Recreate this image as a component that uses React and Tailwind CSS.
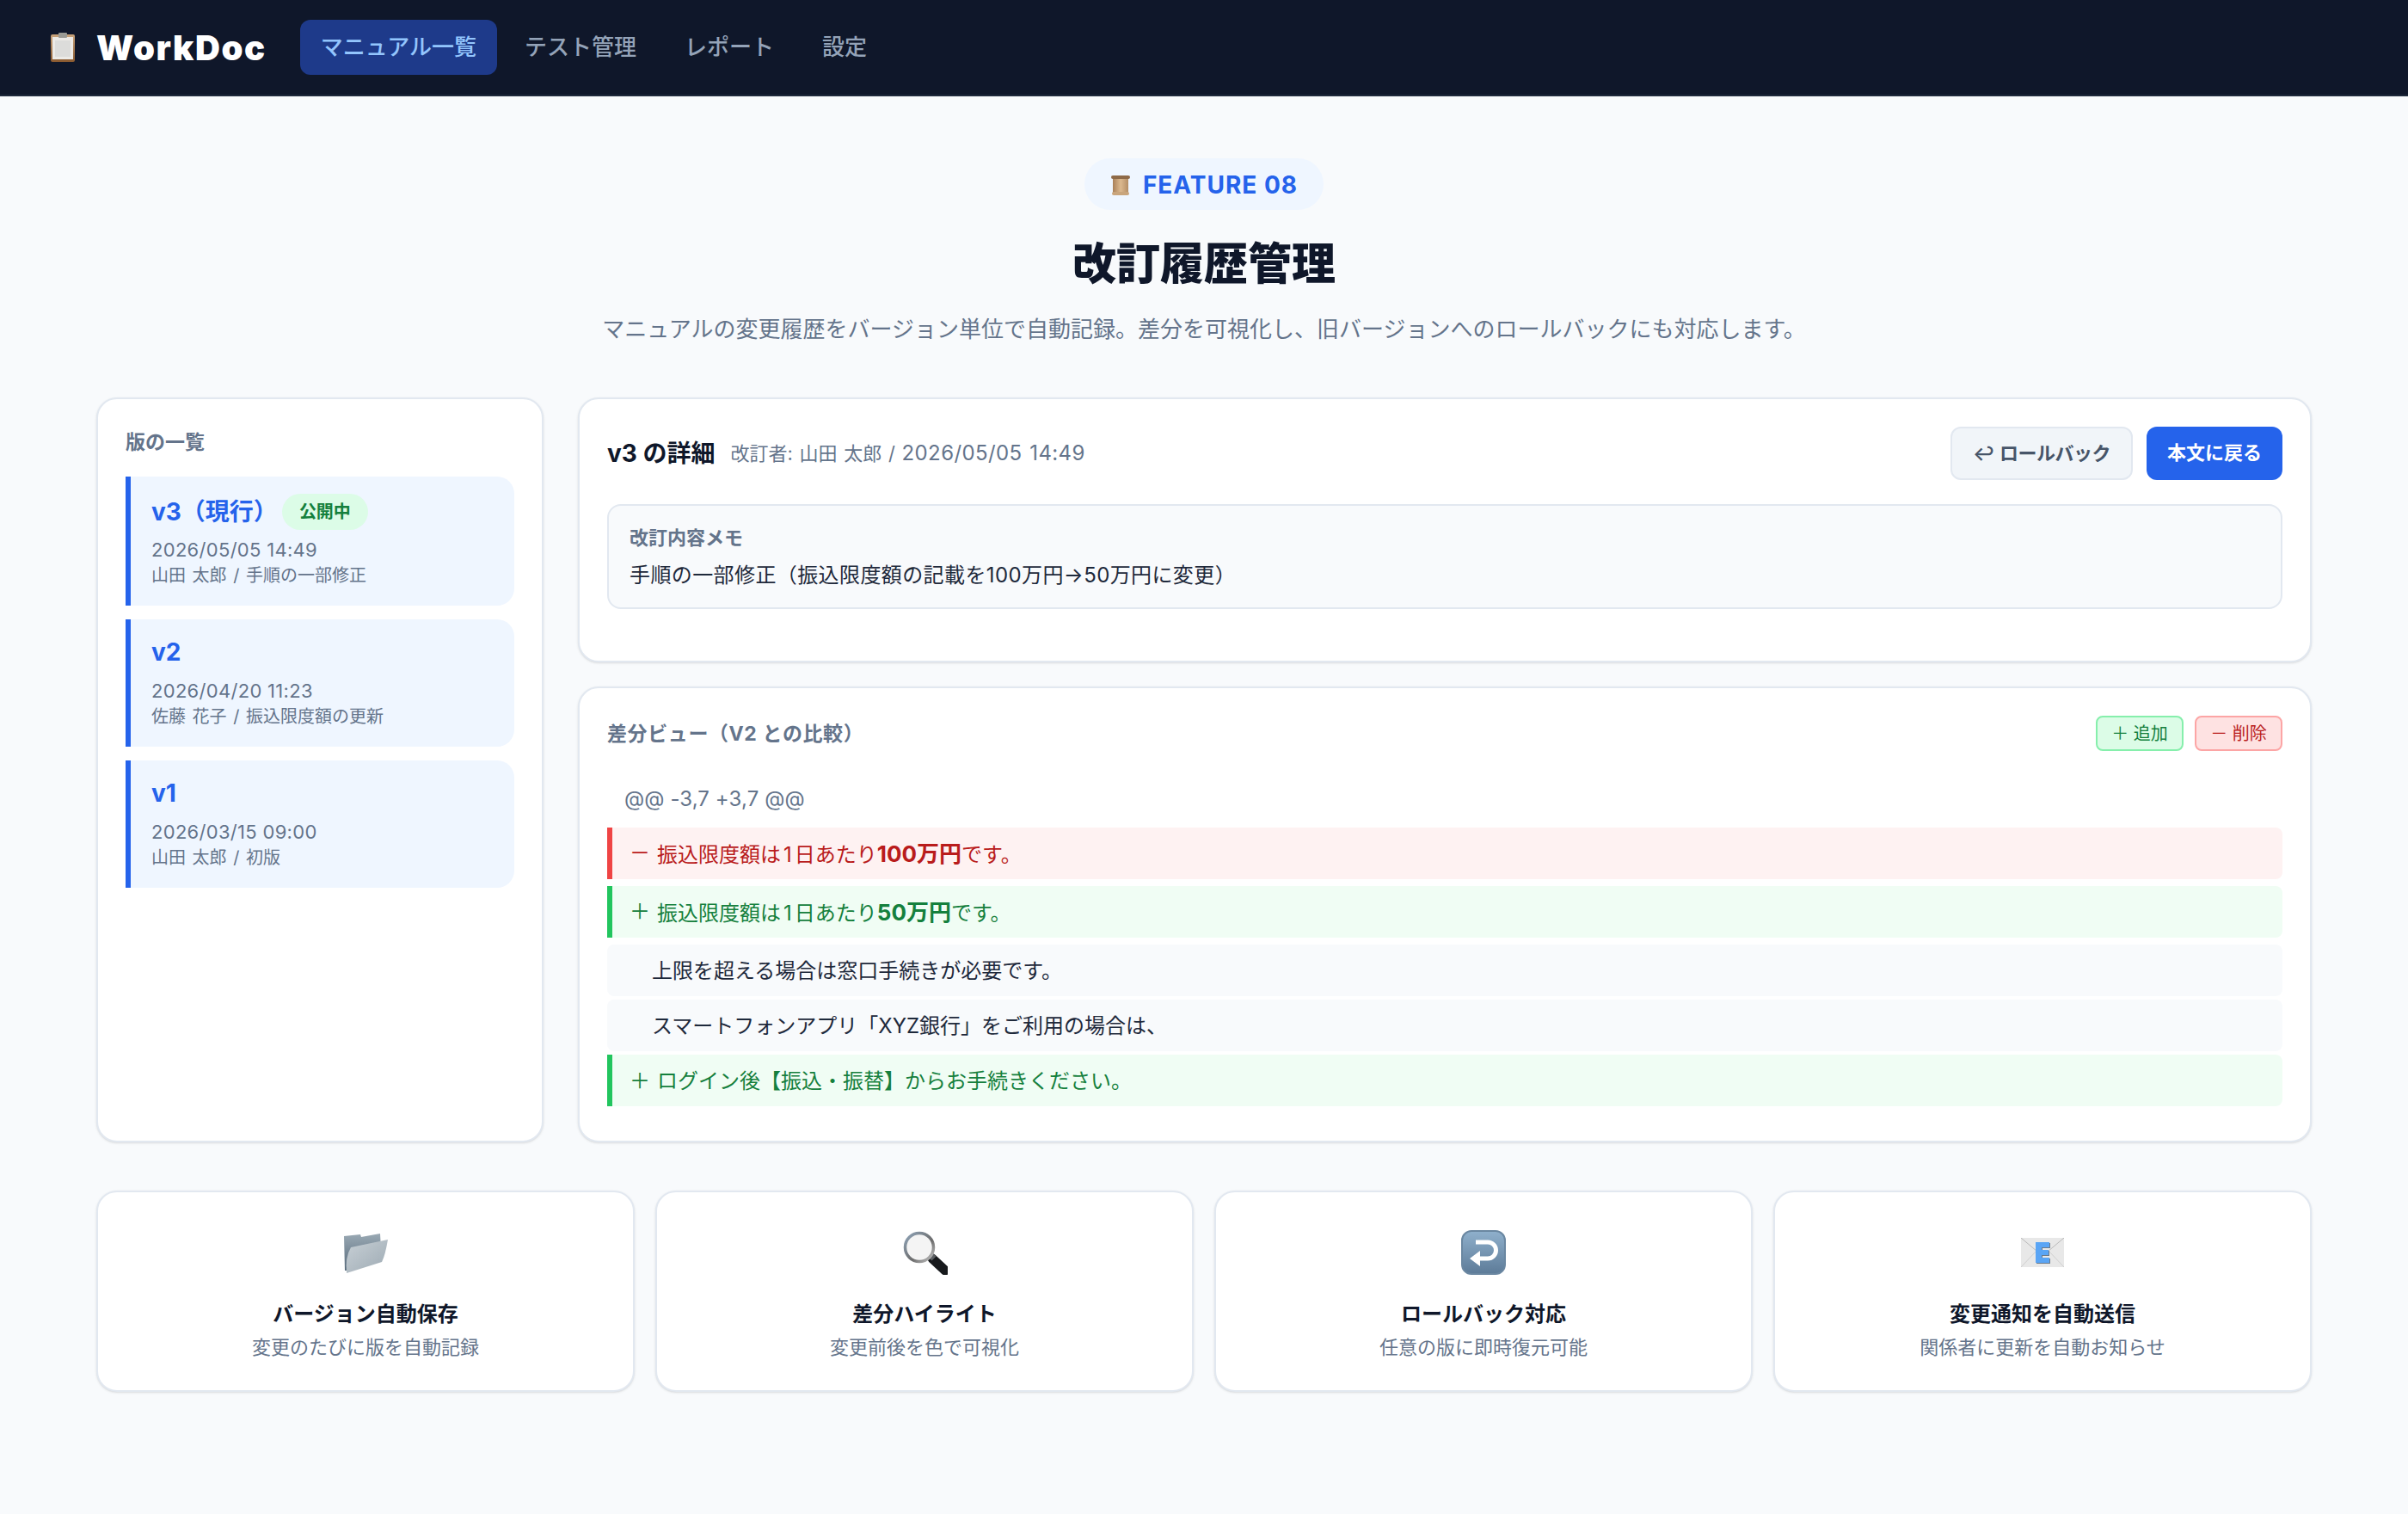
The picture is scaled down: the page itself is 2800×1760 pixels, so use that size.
const versions = [
  { name: "v3（現行）", date: "2026/05/05 14:49", meta: "山田 太郎 / 手順の一部修正", current: true },
  { name: "v2", date: "2026/04/20 11:23", meta: "佐藤 花子 / 振込限度額の更新" },
  { name: "v1", date: "2026/03/15 09:00", meta: "山田 太郎 / 初版" },
];

const navItems = ["テスト管理", "レポート", "設定"];

function ClipboardEmoji() {
  return (
    <svg width="34" height="36" viewBox="0 0 34 36">
      <defs>
        <linearGradient id="board" x1="0" y1="0" x2="0" y2="1">
          <stop offset="0" stopColor="#c9a47c" />
          <stop offset="1" stopColor="#8a5a30" />
        </linearGradient>
      </defs>
      <rect x="3" y="3" width="28" height="32" rx="2" fill="url(#board)" />
      <rect x="5" y="6" width="24" height="26" fill="#eceae6" />
      <rect x="8" y="10" width="18" height="19" fill="#dcdcda" />
      <rect x="12" y="1" width="10" height="6" rx="1" fill="#9a9a94" />
    </svg>
  );
}

function ScrollEmoji() {
  return (
    <svg width="24" height="24" viewBox="0 0 24 24">
      <defs>
        <linearGradient id="parch" x1="0" y1="0" x2="1" y2="0">
          <stop offset="0" stopColor="#a98058" />
          <stop offset="0.5" stopColor="#dcb98f" />
          <stop offset="1" stopColor="#b48e66" />
        </linearGradient>
      </defs>
      <rect x="3" y="3" width="18" height="19" fill="url(#parch)" />
      <rect x="1" y="1" width="22" height="4" rx="2" fill="#8e6a48" />
      <rect x="2" y="20" width="20" height="4" rx="2" fill="#c9a57c" />
    </svg>
  );
}

function FolderEmoji() {
  return (
    <svg width="56" height="52" viewBox="0 0 56 52">
      <defs>
        <linearGradient id="folderBack" x1="0" y1="0" x2="0" y2="1">
          <stop offset="0" stopColor="#9aa9b4" />
          <stop offset="1" stopColor="#56697a" />
        </linearGradient>
        <linearGradient id="folderFront" x1="0" y1="0" x2="1" y2="1">
          <stop offset="0" stopColor="#c8d0d6" />
          <stop offset="1" stopColor="#9daab3" />
        </linearGradient>
      </defs>
      <path d="M3 7 L22 5 L23 8 L45 4 L46 22 L8 47 L4 47 Z" fill="url(#folderBack)" />
      <path d="M11 20 L54 11 Q51 29 47 37 L6 50 Q4 32 11 20 Z" fill="url(#folderFront)" />
    </svg>
  );
}

function MagnifierEmoji() {
  return (
    <svg width="54" height="52" viewBox="0 0 54 52">
      <defs>
        <linearGradient id="lensRing" x1="0" y1="0" x2="1" y2="1">
          <stop offset="0" stopColor="#8fa4b8" />
          <stop offset="0.6" stopColor="#6c6c6c" />
          <stop offset="1" stopColor="#c9c9c9" />
        </linearGradient>
      </defs>
      <path d="M36 33 L51 47" stroke="#17191c" strokeWidth="11" strokeLinecap="round" />
      <path d="M35 30 L38 33" stroke="#5b5f63" strokeWidth="7" />
      <circle cx="21" cy="20" r="16.5" fill="#f4f4f4" stroke="url(#lensRing)" strokeWidth="3.5" />
    </svg>
  );
}

function ReturnEmoji() {
  return (
    <svg width="52" height="52" viewBox="0 0 52 52">
      <defs>
        <linearGradient id="returnBg" x1="0" y1="0" x2="0" y2="1">
          <stop offset="0" stopColor="#8fb0cc" />
          <stop offset="1" stopColor="#5d7b98" />
        </linearGradient>
      </defs>
      <rect x="1" y="1" width="50" height="50" rx="11" fill="url(#returnBg)" stroke="#6a87a1" strokeWidth="2" />
      <path d="M17 14 H31 A9.5 9.5 0 0 1 31 33 H20" fill="none" stroke="#fff" strokeWidth="5" />
      <path d="M22 24 V42 L10 33 Z" fill="#fff" />
    </svg>
  );
}

function EnvelopeEmoji() {
  return (
    <svg width="50" height="34" viewBox="0 0 50 34">
      <rect width="50" height="34" fill="#e8e8e8" />
      <path d="M0 0 L25 21 L50 0" fill="none" stroke="#b9b9b9" strokeWidth="1" />
      <path d="M0 34 L18 15 M50 34 L32 15" stroke="#cfcfcf" strokeWidth="1" />
      <path d="M17 5 H33 V11 H24 V14 H32 V20 H24 V23 H33 V29 H17 Z" fill="#6b7a8a" transform="translate(1 1)" />
      <path d="M17 5 H33 V11 H24 V14 H32 V20 H24 V23 H33 V29 H17 Z" fill="#5aa5f5" />
    </svg>
  );
}

const features = [
  { icon: <FolderEmoji />, title: "バージョン自動保存", desc: "変更のたびに版を自動記録" },
  { icon: <MagnifierEmoji />, title: "差分ハイライト", desc: "変更前後を色で可視化" },
  { icon: <ReturnEmoji />, title: "ロールバック対応", desc: "任意の版に即時復元可能" },
  { icon: <EnvelopeEmoji />, title: "変更通知を自動送信", desc: "関係者に更新を自動お知らせ" },
];

export default function App() {
  return (
    <div className="min-h-[1760px] bg-[#f8fafc] font-['Inter','Noto_Sans_CJK_JP',sans-serif]">
      <header className="flex h-[112px] items-center border-b-2 border-[#1e293b] bg-[#0f172a] pl-[56px]">
        <div className="flex items-center gap-[22px]">
          <ClipboardEmoji />
          <span className="pt-[2px] text-[40px] font-black tracking-[1.6px] text-white">WorkDoc</span>
        </div>
        <nav className="ml-[39px] flex items-center gap-2">
          <a className="flex h-16 items-center rounded-xl bg-[#1e3a8a] px-6 pb-[2px] text-[26px] font-medium text-[#93c5fd]">
            マニュアル一覧
          </a>
          {navItems.map((item) => (
            <a key={item} className="flex h-16 items-center rounded-xl px-6 pb-[2px] text-[26px] font-medium text-[#94a3b8]">
              {item}
            </a>
          ))}
        </nav>
      </header>

      <main className="px-[112px] pt-[72px]">
        <div className="flex flex-col items-center">
          <div className="flex h-[60px] items-center gap-[14px] rounded-full bg-[#eff6ff] px-[30px] pt-[2px] text-[28px] font-bold tracking-[1px] text-[#2563eb]">
            <ScrollEmoji />
            FEATURE 08
          </div>
          <h1 className="mt-[27px] text-[51px] leading-[72px] font-extrabold text-[#0f172a]">改訂履歴管理</h1>
          <p className="mt-[20px] text-[26px] leading-[40px] text-[#64748b]">
            マニュアルの変更履歴をバージョン単位で自動記録。差分を可視化し、旧バージョンへのロールバックにも対応します。
          </p>
        </div>

        <div className="mt-[59px] grid grid-cols-[520px_1fr] gap-10">
          <aside className="rounded-3xl border-2 border-[#e2e8f0] bg-white p-8 shadow-sm">
            <h2 className="mb-[22px] text-[23px] leading-[36px] font-bold text-[#64748b]">版の一覧</h2>
            <div className="flex flex-col gap-4">
              {versions.map((v) => (
                <div key={v.name} className="rounded-r-[20px] border-l-[6px] border-[#2563eb] bg-[#eff6ff] px-6 py-5">
                  <div className={v.current ? "mb-[8px] flex h-[42px] items-center" : "mb-[12px] flex h-[36px] items-center"}>
                    <span className="text-[28px] font-bold text-[#2563eb]">{v.name}</span>
                    {v.current && (
                      <span className="ml-[5px] flex h-[42px] items-center rounded-full bg-[#dcfce7] px-5 text-[20px] font-bold text-[#15803d]">
                        公開中
                      </span>
                    )}
                  </div>
                  <div className="text-[22px] leading-[30px] tracking-[0.3px] text-[#64748b]">{v.date}</div>
                  <div className="text-[20px] leading-[30px] [word-spacing:2px] text-[#64748b]">{v.meta}</div>
                </div>
              ))}
            </div>
          </aside>

          <div className="flex flex-col gap-7">
            <section className="rounded-3xl border-2 border-[#e2e8f0] bg-white p-8 shadow-sm">
              <div className="flex h-[62px] items-center justify-between">
                <div className="flex items-center gap-[18px]">
                  <h3 className="text-[28px] font-bold text-[#0f172a]">v3 の詳細</h3>
                  <span className="text-[22px] [word-spacing:1.5px] text-[#64748b]">
                    改訂者: 山田 太郎 / <span className="text-[24px] tracking-[0.4px]">2026/05/05 14:49</span>
                  </span>
                </div>
                <div className="flex items-center gap-4">
                  <button className="flex h-[62px] items-center gap-[6px] rounded-xl border-2 border-[#e2e8f0] bg-[#f1f5f9] px-6 text-[22px] font-semibold tracking-[-0.5px] text-[#475569]">
                    <span>↩</span>
                    ロールバック
                  </button>
                  <button className="h-[62px] rounded-xl bg-[#2563eb] px-6 pb-[2px] text-[22px] font-bold text-white">
                    本文に戻る
                  </button>
                </div>
              </div>
              <div className="mt-7 mb-7 h-[122px] rounded-2xl border-2 border-[#e2e8f0] bg-[#f8fafc] px-6 pt-[19px]">
                <div className="text-[22px] leading-[36px] font-bold text-[#64748b]">改訂内容メモ</div>
                <div className="mt-[8px] text-[24px] leading-[36px] tracking-[0.4px] text-[#1e293b]">
                  手順の一部修正（振込限度額の記載を100万円→50万円に変更）
                </div>
              </div>
            </section>

            <section className="rounded-3xl border-2 border-[#e2e8f0] bg-white p-8 shadow-sm">
              <div className="mb-[26px] flex h-[41px] items-center justify-between">
                <h3 className="pt-[2px] text-[23px] font-bold tracking-[0.6px] text-[#64748b]">差分ビュー（V2 との比較）</h3>
                <div className="flex gap-[13px]">
                  <span className="flex h-[41px] w-[102px] items-center justify-center rounded-lg border-2 border-[#86efac] bg-[#dcfce7] text-[20px] text-[#15803d]">
                    ＋ 追加
                  </span>
                  <span className="flex h-[41px] w-[102px] items-center justify-center rounded-lg border-2 border-[#fca5a5] bg-[#fee2e2] text-[20px] text-[#b91c1c]">
                    － 削除
                  </span>
                </div>
              </div>

              <div className="flex h-[60px] items-center px-5 text-[24px] tracking-[0.1px] text-[#64748b]">@@ -3,7 +3,7 @@</div>

              <div className="mt-[3px] flex h-[60px] items-center rounded-r-lg border-l-[6px] border-[#ef4444] bg-[#fef2f2] px-5 text-[24px] text-[#b91c1c]">
                <span className="w-8">－</span>
                <span>
                  振込限度額は<span className="mx-[3px]">1</span>日あたり<strong className="text-[26px] font-bold">100万円</strong>です。
                </span>
              </div>
              <div className="mt-2 flex h-[60px] items-center rounded-r-lg border-l-[6px] border-[#22c55e] bg-[#f0fdf4] px-5 text-[24px] text-[#15803d]">
                <span className="w-8">＋</span>
                <span>
                  振込限度額は<span className="mx-[3px]">1</span>日あたり<strong className="text-[26px] font-bold">50万円</strong>です。
                </span>
              </div>
              <div className="mt-2 flex h-[60px] items-center rounded-lg bg-[#f8fafc] pt-[2px] pl-[52px] text-[24px] text-[#1e293b]">
                上限を超える場合は窓口手続きが必要です。
              </div>
              <div className="mt-1 flex h-[60px] items-center rounded-lg bg-[#f8fafc] pt-[2px] pl-[52px] text-[24px] text-[#1e293b]">
                スマートフォンアプリ「XYZ銀行」をご利用の場合は、
              </div>
              <div className="mt-1 mb-2 flex h-[60px] items-center rounded-r-lg border-l-[6px] border-[#22c55e] bg-[#f0fdf4] px-5 pt-[2px] text-[24px] text-[#15803d]">
                <span className="w-8">＋</span>
                <span>ログイン後【振込・振替】からお手続きください。</span>
              </div>
            </section>
          </div>
        </div>

        <div className="mt-14 grid grid-cols-4 gap-6">
          {features.map((f) => (
            <div key={f.title} className="flex h-[234px] flex-col items-center rounded-3xl border-2 border-[#e2e8f0] bg-white shadow-sm">
              <div className="mt-[40px] flex h-[60px] items-center justify-center">{f.icon}</div>
              <div className="mt-[24px] text-[24px] leading-[36px] font-bold text-[#0f172a]">{f.title}</div>
              <div className="mt-[2px] text-[22px] leading-[36px] text-[#64748b]">{f.desc}</div>
            </div>
          ))}
        </div>
      </main>
    </div>
  );
}
